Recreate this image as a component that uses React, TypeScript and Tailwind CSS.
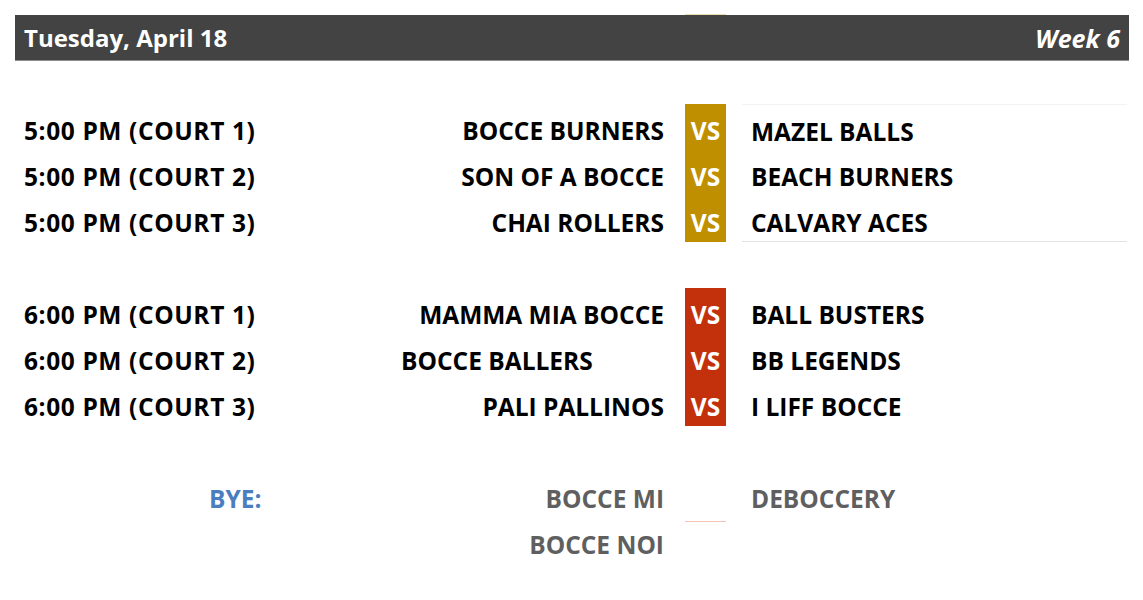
import React from 'react';

type Match = { time: string; home: string; away: string; homeLeft?: boolean };

const earlyGames: Match[] = [
  { time: '5:00 PM (COURT 1)', home: 'BOCCE BURNERS', away: 'MAZEL BALLS' },
  { time: '5:00 PM (COURT 2)', home: 'SON OF A BOCCE', away: 'BEACH BURNERS' },
  { time: '5:00 PM (COURT 3)', home: 'CHAI ROLLERS', away: 'CALVARY ACES' },
];

const lateGames: Match[] = [
  { time: '6:00 PM (COURT 1)', home: 'MAMMA MIA BOCCE', away: 'BALL BUSTERS' },
  { time: '6:00 PM (COURT 2)', home: 'BOCCE BALLERS', away: 'BB LEGENDS', homeLeft: true },
  { time: '6:00 PM (COURT 3)', home: 'PALI PALLINOS', away: 'I LIFF BOCCE' },
];

const font = { fontFamily: '"Open Sans", "Noto Sans", Arial, sans-serif' };

// one line of the schedule: time | home team | VS | away team
const GameRow = ({
  game,
  vsClass,
  awayBorder,
}: {
  game: Match;
  vsClass: string;
  awayBorder?: string;
}) => (
  <div className="flex h-[46px] text-[24.5px] font-bold leading-[53px] text-black">
    <div className="w-[386px] pl-[9px] tracking-[0.6px] whitespace-nowrap">{game.time}</div>
    <div
      className={`flex w-[263px] whitespace-nowrap ${game.homeLeft ? 'justify-start' : 'justify-end'}`}
    >
      {game.home}
    </div>
    <div className="w-[21px]" />
    <div className={`w-[41px] overflow-hidden text-center text-white ${vsClass}`}>VS</div>
    <div className={`ml-[16px] mr-[2px] flex-1 pl-[9px] whitespace-nowrap ${awayBorder ?? ''}`}>
      {game.away}
    </div>
  </div>
);

const App: React.FC = () => {
  return (
    <div className="min-h-[600px] bg-white pl-[15px] pr-[14px] pt-[14px]" style={font}>
      {/* thin sliver of the gold column peeking above the header */}
      <div className="flex h-[1px]">
        <div className="ml-[670px] w-[41px] bg-[#ecdcae]" />
      </div>

      {/* date header */}
      <div className="flex h-[46px] items-start justify-between border-b border-[#8c8c8c] bg-[#434343] pl-[9px] pr-[9px] font-bold leading-[46px] text-white">
        <span className="text-[24px]">Tuesday, April 18</span>
        <span className="text-[25px] italic">Week 6</span>
      </div>

      <div className="h-[43px]" />

      {earlyGames.map((g, i) => (
        <GameRow
          key={g.time}
          game={g}
          vsClass="bg-[#bf8f00]"
          awayBorder={
            i === 0 ? 'border-t border-[#f3f3f3]' : i === 2 ? 'border-b border-[#e2e2e2]' : ''
          }
        />
      ))}

      <div className="h-[46px]" />

      {lateGames.map((g) => (
        <GameRow key={g.time} game={g} vsClass="bg-[#c2310c]" />
      ))}

      <div className="h-[46px]" />

      {/* bye week */}
      <div className="flex h-[46px] text-[24.5px] font-bold leading-[53px]">
        <div className="w-[386px] pl-[194px] text-[#4a7ebf]">BYE:</div>
        <div className="flex w-[263px] justify-end text-[#5f5f5f]">BOCCE MI</div>
        <div className="w-[21px]" />
        <div className="h-[50px] w-[41px] border-b border-[#f4c3b6]" />
        <div className="ml-[16px] pl-[9px] text-[#5f5f5f]">DEBOCCERY</div>
      </div>
      <div className="flex h-[46px] text-[24.5px] font-bold leading-[53px]">
        <div className="w-[386px]" />
        <div className="flex w-[263px] justify-end text-[#5f5f5f]">BOCCE NOI</div>
      </div>
    </div>
  );
};

export default App;
